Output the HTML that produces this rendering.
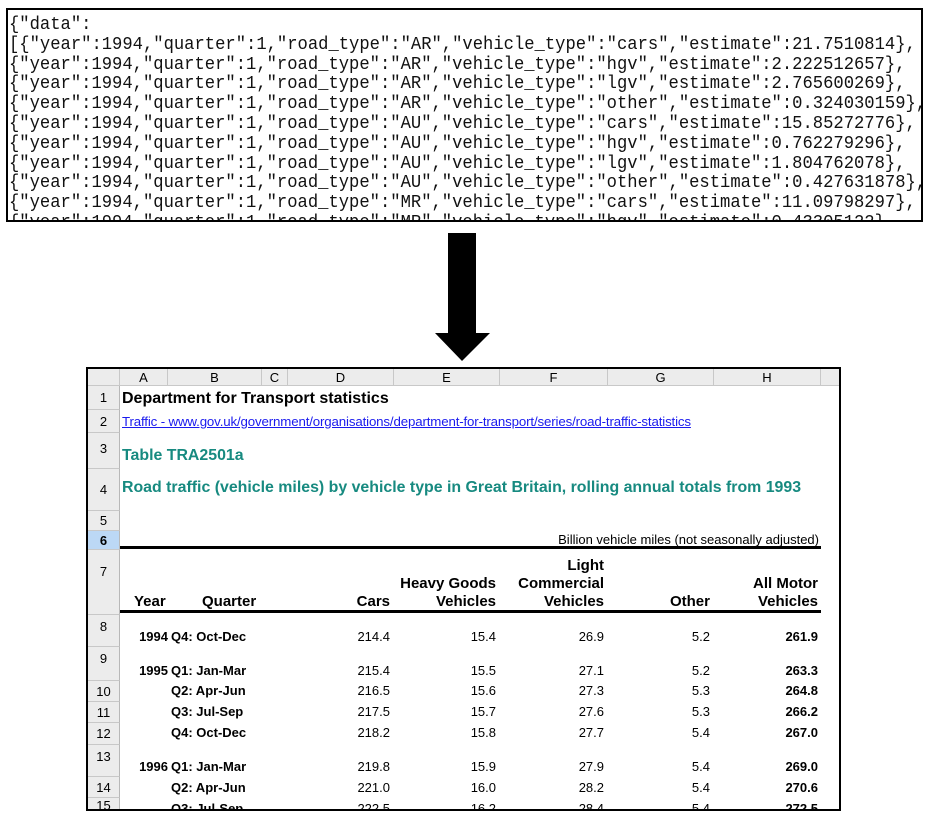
<!DOCTYPE html>
<html><head><style>
*{margin:0;padding:0;box-sizing:border-box}
body{width:931px;height:817px;background:#fff;position:relative;overflow:hidden;font-family:"Liberation Sans",Arial,sans-serif}
.a{position:absolute;white-space:nowrap}
#json{position:absolute;left:6px;top:8px;width:917px;height:214px;border:2px solid #000;overflow:hidden;background:#fff}
#json pre{font-family:"Liberation Mono",monospace;font-size:18px;line-height:19.8px;margin:6px 0 0 1px;color:#111;transform:scaleX(0.954);transform-origin:0 0}
#ss{position:absolute;left:86px;top:367px;width:755px;height:444px;border:2px solid #000;overflow:hidden;background:#fff}
.hd{position:absolute;background:#ececec;border-right:1px solid #c8c8c8;border-bottom:1px solid #c8c8c8;font-size:13px;line-height:17px;color:#000;text-align:center}
.rn{position:absolute;left:0;width:32px;background:#ececec;border-bottom:1px solid #c8c8c8;border-right:1px solid #b8b8b8;font-size:13px;text-align:center}
.t{position:absolute;white-space:nowrap;font-size:13px;line-height:16px}
.r{text-align:right}
.b{font-weight:bold}
.teal{color:#178a80;font-weight:bold;font-size:15.9px}
.hh{position:absolute;white-space:nowrap;font-size:15px;font-weight:bold;line-height:18px;text-align:right}
</style></head><body>
<div id="json"><pre>{"data":
[{"year":1994,"quarter":1,"road_type":"AR","vehicle_type":"cars","estimate":21.7510814},
{"year":1994,"quarter":1,"road_type":"AR","vehicle_type":"hgv","estimate":2.222512657},
{"year":1994,"quarter":1,"road_type":"AR","vehicle_type":"lgv","estimate":2.765600269},
{"year":1994,"quarter":1,"road_type":"AR","vehicle_type":"other","estimate":0.324030159},
{"year":1994,"quarter":1,"road_type":"AU","vehicle_type":"cars","estimate":15.85272776},
{"year":1994,"quarter":1,"road_type":"AU","vehicle_type":"hgv","estimate":0.762279296},
{"year":1994,"quarter":1,"road_type":"AU","vehicle_type":"lgv","estimate":1.804762078},
{"year":1994,"quarter":1,"road_type":"AU","vehicle_type":"other","estimate":0.427631878},
{"year":1994,"quarter":1,"road_type":"MR","vehicle_type":"cars","estimate":11.09798297},
{"year":1994,"quarter":1,"road_type":"MR","vehicle_type":"hgv","estimate":0.43305122},</pre></div>

<svg class="a" style="left:430px;top:230px" width="66" height="135"><polygon points="18,3 46,3 46,103 60,103 32,131 5,103 18,103" fill="#000"/></svg>

<div id="ss">
<div class="hd" style="left:0;top:0;width:32px;height:17px"></div>
<div class="hd" style="left:32px;top:0;width:48px;height:17px">A</div>
<div class="hd" style="left:80px;top:0;width:94px;height:17px">B</div>
<div class="hd" style="left:174px;top:0;width:26px;height:17px">C</div>
<div class="hd" style="left:200px;top:0;width:106px;height:17px">D</div>
<div class="hd" style="left:306px;top:0;width:106px;height:17px">E</div>
<div class="hd" style="left:412px;top:0;width:108px;height:17px">F</div>
<div class="hd" style="left:520px;top:0;width:106px;height:17px">G</div>
<div class="hd" style="left:626px;top:0;width:107px;height:17px">H</div>
<div class="hd" style="left:733px;top:0;width:30px;height:17px"></div>

<div class="rn" style="top:17px;height:24px;line-height:24px">1</div>
<div class="rn" style="top:41px;height:23px;line-height:23px">2</div>
<div class="rn" style="top:64px;height:36px;line-height:32px">3</div>
<div class="rn" style="top:100px;height:42px;line-height:42px">4</div>
<div class="rn" style="top:142px;height:20px;line-height:20px">5</div>
<div class="rn" style="top:162px;height:19px;line-height:19px;background:#bcd8f5;font-weight:bold">6</div>
<div class="rn" style="top:181px;height:65px;line-height:44px">7</div>
<div class="rn" style="top:246px;height:32px;line-height:24px">8</div>
<div class="rn" style="top:278px;height:34px;line-height:24px">9</div>
<div class="rn" style="top:312px;height:21px;line-height:21px">10</div>
<div class="rn" style="top:333px;height:21px;line-height:21px">11</div>
<div class="rn" style="top:354px;height:22px;line-height:22px">12</div>
<div class="rn" style="top:376px;height:32px;line-height:24px">13</div>
<div class="rn" style="top:408px;height:21px;line-height:21px">14</div>
<div class="rn" style="top:429px;height:21px;line-height:16px">15</div>

<div class="t b" style="left:34px;top:21px;font-size:16px;line-height:18px">Department for Transport statistics</div>
<div class="t" style="left:34px;top:45px;font-size:13.3px;color:#1a1aee;text-decoration:underline;letter-spacing:-0.15px">Traffic - www.gov.uk/government/organisations/department-for-transport/series/road-traffic-statistics</div>
<div class="t teal" style="left:34px;top:78px;line-height:18px">Table TRA2501a</div>
<div class="t teal" style="left:34px;top:110px;line-height:18px">Road traffic (vehicle miles) by vehicle type in Great Britain, rolling annual totals from 1993</div>
<div class="t r" style="right:20px;top:163px;font-size:13px">Billion vehicle miles (not seasonally adjusted)</div>
<div class="a" style="left:32px;top:177px;width:701px;height:3px;background:#000"></div>

<div class="hh" style="left:46px;top:224px;text-align:left">Year</div>
<div class="hh" style="left:114px;top:224px;text-align:left">Quarter</div>
<div class="hh" style="right:449px;top:224px">Cars</div>
<div class="hh" style="right:343px;top:206px">Heavy Goods<br>Vehicles</div>
<div class="hh" style="right:235px;top:188px">Light<br>Commercial<br>Vehicles</div>
<div class="hh" style="right:129px;top:224px">Other</div>
<div class="hh" style="right:21px;top:206px">All Motor<br>Vehicles</div>
<div class="a" style="left:32px;top:241px;width:701px;height:3px;background:#000"></div>

<div class="t b r" style="right:671px;top:260px">1994</div><div class="t b" style="left:83px;top:260px">Q4: Oct-Dec</div>
<div class="t r" style="right:449px;top:260px">214.4</div><div class="t r" style="right:343px;top:260px">15.4</div><div class="t r" style="right:235px;top:260px">26.9</div><div class="t r" style="right:129px;top:260px">5.2</div><div class="t b r" style="right:21px;top:260px">261.9</div>

<div class="t b r" style="right:671px;top:294px">1995</div><div class="t b" style="left:83px;top:294px">Q1: Jan-Mar</div>
<div class="t r" style="right:449px;top:294px">215.4</div><div class="t r" style="right:343px;top:294px">15.5</div><div class="t r" style="right:235px;top:294px">27.1</div><div class="t r" style="right:129px;top:294px">5.2</div><div class="t b r" style="right:21px;top:294px">263.3</div>

<div class="t b" style="left:83px;top:314px">Q2: Apr-Jun</div>
<div class="t r" style="right:449px;top:314px">216.5</div><div class="t r" style="right:343px;top:314px">15.6</div><div class="t r" style="right:235px;top:314px">27.3</div><div class="t r" style="right:129px;top:314px">5.3</div><div class="t b r" style="right:21px;top:314px">264.8</div>

<div class="t b" style="left:83px;top:335px">Q3: Jul-Sep</div>
<div class="t r" style="right:449px;top:335px">217.5</div><div class="t r" style="right:343px;top:335px">15.7</div><div class="t r" style="right:235px;top:335px">27.6</div><div class="t r" style="right:129px;top:335px">5.3</div><div class="t b r" style="right:21px;top:335px">266.2</div>

<div class="t b" style="left:83px;top:356px">Q4: Oct-Dec</div>
<div class="t r" style="right:449px;top:356px">218.2</div><div class="t r" style="right:343px;top:356px">15.8</div><div class="t r" style="right:235px;top:356px">27.7</div><div class="t r" style="right:129px;top:356px">5.4</div><div class="t b r" style="right:21px;top:356px">267.0</div>

<div class="t b r" style="right:671px;top:390px">1996</div><div class="t b" style="left:83px;top:390px">Q1: Jan-Mar</div>
<div class="t r" style="right:449px;top:390px">219.8</div><div class="t r" style="right:343px;top:390px">15.9</div><div class="t r" style="right:235px;top:390px">27.9</div><div class="t r" style="right:129px;top:390px">5.4</div><div class="t b r" style="right:21px;top:390px">269.0</div>

<div class="t b" style="left:83px;top:411px">Q2: Apr-Jun</div>
<div class="t r" style="right:449px;top:411px">221.0</div><div class="t r" style="right:343px;top:411px">16.0</div><div class="t r" style="right:235px;top:411px">28.2</div><div class="t r" style="right:129px;top:411px">5.4</div><div class="t b r" style="right:21px;top:411px">270.6</div>

<div class="t b" style="left:83px;top:432px">Q3: Jul-Sep</div>
<div class="t r" style="right:449px;top:432px">222.5</div><div class="t r" style="right:343px;top:432px">16.2</div><div class="t r" style="right:235px;top:432px">28.4</div><div class="t r" style="right:129px;top:432px">5.4</div><div class="t b r" style="right:21px;top:432px">272.5</div>
</div>
</body></html>
